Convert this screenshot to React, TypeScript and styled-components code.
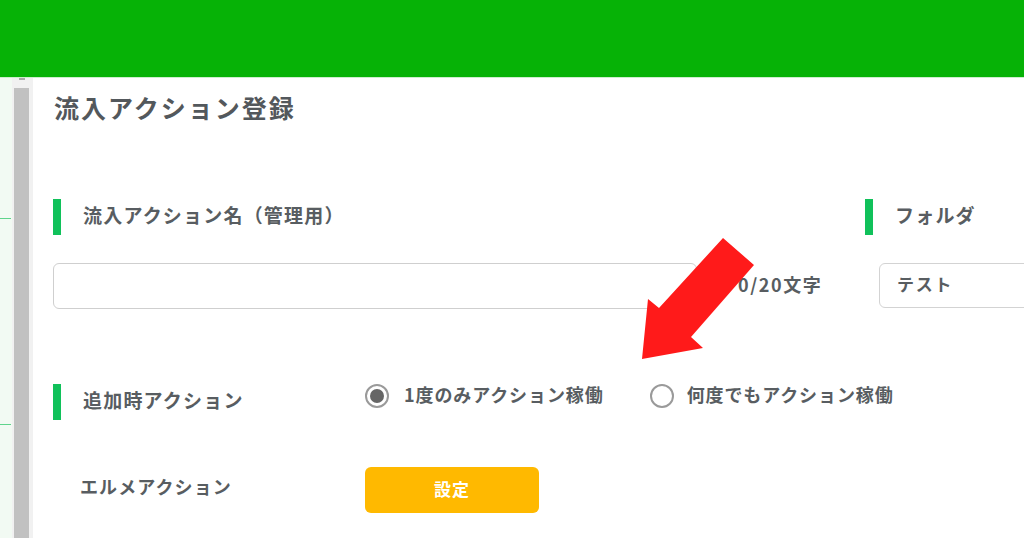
import React from 'react'
import styled, { createGlobalStyle } from 'styled-components'

const GlobalStyle = createGlobalStyle`
  html, body {
    margin: 0;
    padding: 0;
    background: #fff;
    overflow: hidden;
  }
  body {
    font-family: "Noto Sans CJK JP", "Noto Sans", sans-serif;
    color: #555a5e;
  }
`

const Page = styled.div`
  position: relative;
  width: 1024px;
  height: 538px;
  overflow: hidden;
  display: flex;
  flex-direction: column;
`
const Header = styled.header`
  height: 77px;
  flex-shrink: 0;
  background-color: #06b206;
  border-bottom: 1px solid #cdeecd;
`
const Body = styled.div`
  flex: 1;
  display: flex;
  min-height: 0;
`
const SideStrip = styled.div`
  width: 12px;
  flex-shrink: 0;
  background-color: #f2faf3;
  display: flex;
  flex-direction: column;
  padding-top: 140px;
  gap: 205px;
  .line {
    height: 1px;
    width: 11px;
    background-color: #5fd48c;
  }
`
const ScrollTrack = styled.div`
  width: 15px;
  flex-shrink: 0;
  background-color: #f1f1f1;
  padding: 0 4px 0 2px;
  display: flex;
  flex-direction: column;
  .arrow {
    height: 10px;
    display: flex;
    justify-content: center;
    span {
      width: 6px;
      height: 2px;
      background-color: #a8a8a8;
    }
  }
  .thumb {
    flex: 1;
    background-color: #c1c1c1;
  }
`
const Content = styled.main`
  flex: 1;
  min-width: 0;
  padding: 0 0 0 20px;
  display: flex;
  flex-direction: column;
`
const Title = styled.h1`
  margin: 14px 0 0 1px;
  font-size: 25px;
  line-height: 30px;
  letter-spacing: 2px;
  font-weight: 700;
  color: #53585c;
`
const FieldsRow = styled.div`
  display: flex;
  gap: 20px;
  margin-top: 77px;
`
const Field = styled.div<{ $width: number }>`
  width: ${p => p.$width}px;
  flex-shrink: 0;
  display: flex;
  flex-direction: column;
  gap: 28px;
`
const Heading = styled.div<{ $width?: number }>`
  display: flex;
  align-items: center;
  gap: 22px;
  height: 36px;
  width: ${p => (p.$width ? `${p.$width}px` : 'auto')};
  flex-shrink: 0;
  font-size: 19px;
  font-weight: 700;
  letter-spacing: 1.2px;
  color: #585d61;
  &::before {
    content: '';
    width: 8px;
    height: 36px;
    background-color: #10c15a;
  }
  span {
    margin-top: -6px;
  }
`
const InputRow = styled.div`
  display: flex;
  align-items: center;
`
const TextInput = styled.input`
  box-sizing: border-box;
  width: 644px;
  height: 46px;
  border: 1px solid #cfcfcf;
  border-radius: 6px;
  outline: none;
`
const Counter = styled.span`
  margin-left: 41px;
  margin-top: -4px;
  font-size: 18px;
  font-weight: 700;
  letter-spacing: 1.6px;
  color: #585d61;
`
const SelectBox = styled.div`
  box-sizing: border-box;
  margin-left: 14px;
  width: 220px;
  height: 45px;
  border: 1px solid #d3d3d3;
  border-radius: 6px;
  padding: 0 0 4px 17px;
  display: flex;
  align-items: center;
  font-size: 17px;
  font-weight: 700;
  letter-spacing: 1.8px;
  color: #585d61;
`
const OptionRow = styled.div`
  display: flex;
  align-items: flex-start;
  margin-top: 75px;
`
const Radio = styled.label<{ $gap: number }>`
  display: flex;
  align-items: center;
  gap: ${p => p.$gap}px;
  margin: 0 46px 0 0;
  height: 24px;
  font-size: 18px;
  font-weight: 700;
  letter-spacing: 0.9px;
  color: #585d61;
  span.text {
    margin-top: -5px;
  }
`
const RadioMark = styled.span<{ $checked?: boolean }>`
  box-sizing: border-box;
  width: 24px;
  height: 24px;
  border-radius: 50%;
  border: 2px solid #9a9a9a;
  display: flex;
  align-items: center;
  justify-content: center;
  &::after {
    content: '';
    width: 14px;
    height: 14px;
    border-radius: 50%;
    background-color: ${p => (p.$checked ? '#666' : 'transparent')};
  }
`
const ActionRow = styled.div`
  display: flex;
  align-items: center;
  margin-top: 47px;
`
const ActionLabel = styled.span`
  width: 285px;
  padding: 0 0 8px 27px;
  flex-shrink: 0;
  font-size: 18px;
  font-weight: 700;
  letter-spacing: 1.1px;
  color: #585d61;
`
const SettingButton = styled.button`
  width: 174px;
  height: 46px;
  border: none;
  border-radius: 6px;
  background-color: #ffb900;
  color: #fff;
  font-family: inherit;
  font-size: 17px;
  font-weight: 700;
  letter-spacing: 1px;
  padding-bottom: 4px;
`
const Annotation = styled.svg`
  position: absolute;
  left: 0;
  top: 0;
  pointer-events: none;
`

export default function App() {
  return (
    <>
      <GlobalStyle />
      <Page>
        <Header />
        <Body>
          <SideStrip>
            <div className="line" />
            <div className="line" />
          </SideStrip>
          <ScrollTrack>
            <div className="arrow">
              <span />
            </div>
            <div className="thumb" />
          </ScrollTrack>
          <Content>
            <Title>流入アクション登録</Title>
            <FieldsRow>
              <Field $width={792}>
                <Heading>
                  <span>流入アクション名（管理用）</span>
                </Heading>
                <InputRow>
                  <TextInput />
                  <Counter>0/20文字</Counter>
                </InputRow>
              </Field>
              <Field $width={260}>
                <Heading>
                  <span>フォルダ</span>
                </Heading>
                <SelectBox>テスト</SelectBox>
              </Field>
            </FieldsRow>
            <OptionRow>
              <Heading $width={312}>
                <span>追加時アクション</span>
              </Heading>
              <Radio $gap={15}>
                <RadioMark $checked />
                <span className="text">1度のみアクション稼働</span>
              </Radio>
              <Radio $gap={13}>
                <RadioMark />
                <span className="text">何度でもアクション稼働</span>
              </Radio>
            </OptionRow>
            <ActionRow>
              <ActionLabel>エルメアクション</ActionLabel>
              <SettingButton>設定</SettingButton>
            </ActionRow>
          </Content>
        </Body>
        <Annotation width="1024" height="538" viewBox="0 0 1024 538">
          <polygon
            points="723,238 754,265 691,337 703,348 642,359 648,299 659,308"
            fill="#ff1a1a"
          />
        </Annotation>
      </Page>
    </>
  )
}
